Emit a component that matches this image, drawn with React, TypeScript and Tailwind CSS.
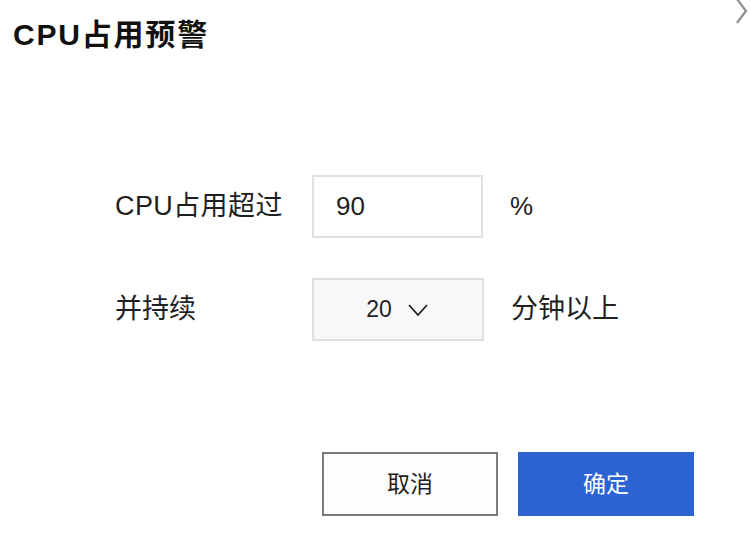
import { useState } from 'react';

const FONT = { fontFamily: '"Liberation Sans", "Noto Sans CJK SC", sans-serif' };

export default function App() {
  const [percent, setPercent] = useState('90');
  const [minutes] = useState('20');

  return (
    <div className="relative w-[750px] h-[544px] bg-white text-[#1f1f1f] overflow-hidden" style={FONT}>
      {/* collapse chevron, cut off at the edge */}
      <svg className="absolute right-[1px] -top-[2px]" width="14" height="26" viewBox="0 0 14 26" fill="none">
        <polyline points="2,1 11,13 2,25" stroke="#8f8f8f" strokeWidth="2.2" />
      </svg>

      <h1 className="pt-[17px] pl-[13px] text-[30px] leading-[36px] font-bold text-[#111] tracking-[1.8px]">
        CPU占用预警
      </h1>

      <div className="mt-[122px] pl-[115px] flex flex-col gap-[40px]">
        <div className="flex items-center">
          <span className="w-[197px] text-[27px] tracking-[0.4px]">CPU占用超过</span>
          <input
            value={percent}
            onChange={e => setPercent(e.target.value)}
            className="w-[171px] h-[63px] border-2 border-[#e0e0e0] bg-white pl-[22px] text-[26px] outline-none"
            style={FONT}
          />
          <span className="ml-[27px] text-[26px]">%</span>
        </div>
        <div className="flex items-center">
          <span className="w-[197px] text-[27px]">并持续</span>
          <button className="w-[172px] h-[63px] border-2 border-[#e0e0e0] bg-[#f8f8f8] flex items-center justify-center gap-[16px] text-[23px]">
            <span className="-ml-[2px]">{minutes}</span>
            <svg width="20" height="12" viewBox="0 0 20 12" fill="none">
              <polyline points="1,1 10,11 19,1" stroke="#222" strokeWidth="1.8" />
            </svg>
          </button>
          <span className="ml-[27px] text-[27px]">分钟以上</span>
        </div>
      </div>

      <div className="mt-[111px] flex justify-end gap-[20px] pr-[56px]">
        <button className="w-[176px] h-[64px] border-2 border-[#7a7a7a] bg-[#fdfdfd] text-[23px] text-[#222]">取消</button>
        <button className="w-[176px] h-[64px] bg-[#2b63d3] text-[23px] text-white">确定</button>
      </div>
    </div>
  );
}
